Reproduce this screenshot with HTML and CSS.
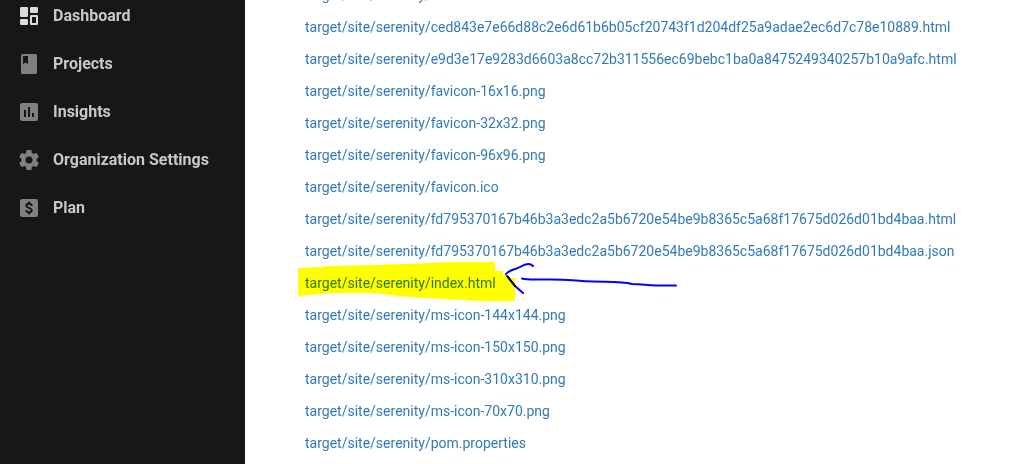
FILE: index.html
```html
<!DOCTYPE html>
<html lang="en">
<head>
<meta charset="utf-8">
<title>Artifacts</title>
<link rel="stylesheet" href="styles.css">
</head>
<body>
<div class="app">
  <nav class="sidebar">
    <a class="nav-item active" href="#"><svg class="icon" viewBox="0 0 18 18"><rect width="8" height="10" rx="1.3"/><rect x="10" width="8" height="6" rx="1.3"/><rect y="12" width="8" height="6" rx="1.3"/><path fill-rule="evenodd" d="M11.3 8h5.4Q18 8 18 9.300v7.400Q18 18 16.700 18h-5.400Q10 18 10 16.700V9.300Q10 8 11.300 8zM12 10v6h4v-6z"/></svg><span class="label">Dashboard</span></a>
    <a class="nav-item" href="#"><svg class="icon" viewBox="0 0 18 18"><path fill-rule="evenodd" d="M2.500-1h13Q17 -1 17 .5v17Q17 19 15.500 19h-13Q1 19 1 17.500V.5Q1-1 2.500-1zM3 1v8l2.500-1.500L8 9V1z"/></svg><span class="label">Projects</span></a>
    <a class="nav-item" href="#"><svg class="icon" viewBox="0 0 18 18"><path fill-rule="evenodd" d="M2 0h14q2 0 2 2v14q0 2-2 2H2q-2 0-2-2V2Q0 0 2 0zM4 7v7h2V7zM8 4v10h2V4zM12 10v4h2v-4z"/></svg><span class="label">Insights</span></a>
    <a class="nav-item" href="#"><svg class="icon" viewBox="3 3 18 18"><path d="M19.430 12.980c.040-.320.070-.640.070-.980s-.030-.660-.070-.980l2.110-1.650c.190-.150.240-.420.120-.640l-2-3.460c-.120-.220-.390-.300-.610-.220l-2.490 1c-.520-.400-1.080-.730-1.690-.980l-.380-2.650C14.460 2.180 14.250 2 14 2h-4c-.250 0-.460.180-.490.420l-.380 2.650c-.610.250-1.170.590-1.690.980l-2.490-1c-.230-.090-.490 0-.610.220l-2 3.460c-.130.220-.070.490.120.640l2.110 1.650c-.040.320-.070.650-.070.980s.030.660.070.980l-2.110 1.650c-.190.150-.240.420-.120.640l2 3.460c.120.220.390.300.610.220l2.490-1c.520.400 1.080.730 1.690.980l.380 2.650c.030.240.240.420.490.420h4c.250 0 .460-.180.490-.420l.380-2.650c.610-.250 1.170-.590 1.690-.980l2.490 1c.230.090.490 0 .610-.220l2-3.460c.120-.220.070-.490-.120-.640zM12 15.500A3.500 3.500 0 1 1 12 8.500a3.500 3.500 0 0 1 0 7z"/></svg><span class="label">Organization Settings</span></a>
    <a class="nav-item" href="#"><svg class="icon" viewBox="0 0 18 18"><rect width="18" height="18" rx="2"/><path class="cutout" d="M11.700 6.700C11.700 5.200 10.500 4.700 9 4.700S6.300 5.300 6.300 6.700C6.300 9.200 11.700 8.500 11.700 11.300C11.700 12.700 10.500 13.300 9 13.300S6.300 12.700 6.300 11.300M9 2.500v2.200M9 13.300v2.200"/></svg><span class="label">Plan</span></a>
  </nav>
  <main class="content">
    <ul class="files">
      <li><a href="#">target/site/serenity/</a></li>
      <li><a href="#">target/site/serenity/ced843e7e66d88c2e6d61b6b05cf20743f1d204df25a9adae2ec6d7c78e10889.html</a></li>
      <li><a href="#">target/site/serenity/e9d3e17e9283d6603a8cc72b311556ec69bebc1ba0a8475249340257b10a9afc.html</a></li>
      <li><a href="#">target/site/serenity/favicon-16x16.png</a></li>
      <li><a href="#">target/site/serenity/favicon-32x32.png</a></li>
      <li><a href="#">target/site/serenity/favicon-96x96.png</a></li>
      <li><a href="#">target/site/serenity/favicon.ico</a></li>
      <li><a href="#">target/site/serenity/fd795370167b46b3a3edc2a5b6720e54be9b8365c5a68f17675d026d01bd4baa.html</a></li>
      <li><a href="#">target/site/serenity/fd795370167b46b3a3edc2a5b6720e54be9b8365c5a68f17675d026d01bd4baa.json</a></li>
      <li class="marked"><a href="#">target/site/serenity/index.html</a>
        <svg class="markup" viewBox="297 261 384 42" aria-hidden="true">
          <path class="marker" d="M298 268L323 267L326 266L372 265L405 264L428 263L450 262H495V271H503V275H510V278H515V301H472L468 300L440 299L428 298L410 297L390 295L374 293H330L310 295L298 296z"/>
          <path class="pen" d="M506 274C510 269 515 270 520 267S530 263 533 266M507 276L515 286L523 293M522 278.500C527 280 535 279.500 543 279.500C570 279 575 281 593 281.500C610 282 621 281 632 284C643 284 649 286 658 285.500H676"/>
          <path class="pen-dark" d="M508 277L515 286"/>
        </svg>
      </li>
      <li><a href="#">target/site/serenity/ms-icon-144x144.png</a></li>
      <li><a href="#">target/site/serenity/ms-icon-150x150.png</a></li>
      <li><a href="#">target/site/serenity/ms-icon-310x310.png</a></li>
      <li><a href="#">target/site/serenity/ms-icon-70x70.png</a></li>
      <li><a href="#">target/site/serenity/pom.properties</a></li>
    </ul>
  </main>
</div>
</body>
</html>
```
FILE: styles.css
```css
* {
  box-sizing: border-box;
}

body {
  margin: 0;
  background: #fff;
  font-family: Roboto, "Liberation Sans", sans-serif;
}

.app {
  display: flex;
  height: 100vh;
  overflow: hidden;
}

.sidebar {
  flex: 0 0 245px;
  background: #171717;
}

.nav-item {
  display: flex;
  align-items: center;
  gap: 15px;
  height: 48px;
  padding-left: 20px;
  color: #c8c8c8;
  font-size: 16px;
  font-weight: 700;
  text-decoration: none;
}

/* Both lists are scrolled part-way through their first row. */
.nav-item:first-child {
  margin-top: -8px;
}

.label {
  padding-bottom: 2px;
}

.icon {
  width: 18px;
  height: 18px;
  overflow: visible;
  fill: #808080;
}

.active .icon {
  fill: #dcdcdc;
}

.cutout {
  fill: none;
  stroke: #171717;
  stroke-width: 2;
}

.content {
  flex: 1;
  min-width: 0;
  padding-left: 60px;
}

.files {
  margin: -21px 0 0;
  padding: 0;
  list-style: none;
  font-size: 14px;
  line-height: 32px;
}

.files li {
  height: 32px;
  white-space: nowrap;
}

.files a {
  color: #337ab7;
  text-decoration: none;
}

.marked {
  position: relative;
}

.markup {
  position: absolute;
  top: -6px;
  left: -8px;
  width: 384px;
  height: 42px;
  mix-blend-mode: multiply;
  pointer-events: none;
}

.marker {
  fill: #ff0;
}

.pen,
.pen-dark {
  fill: none;
  stroke: #00f;
  stroke-width: 2;
  stroke-linecap: round;
  stroke-linejoin: round;
}

.pen-dark {
  stroke: #000;
}
```
